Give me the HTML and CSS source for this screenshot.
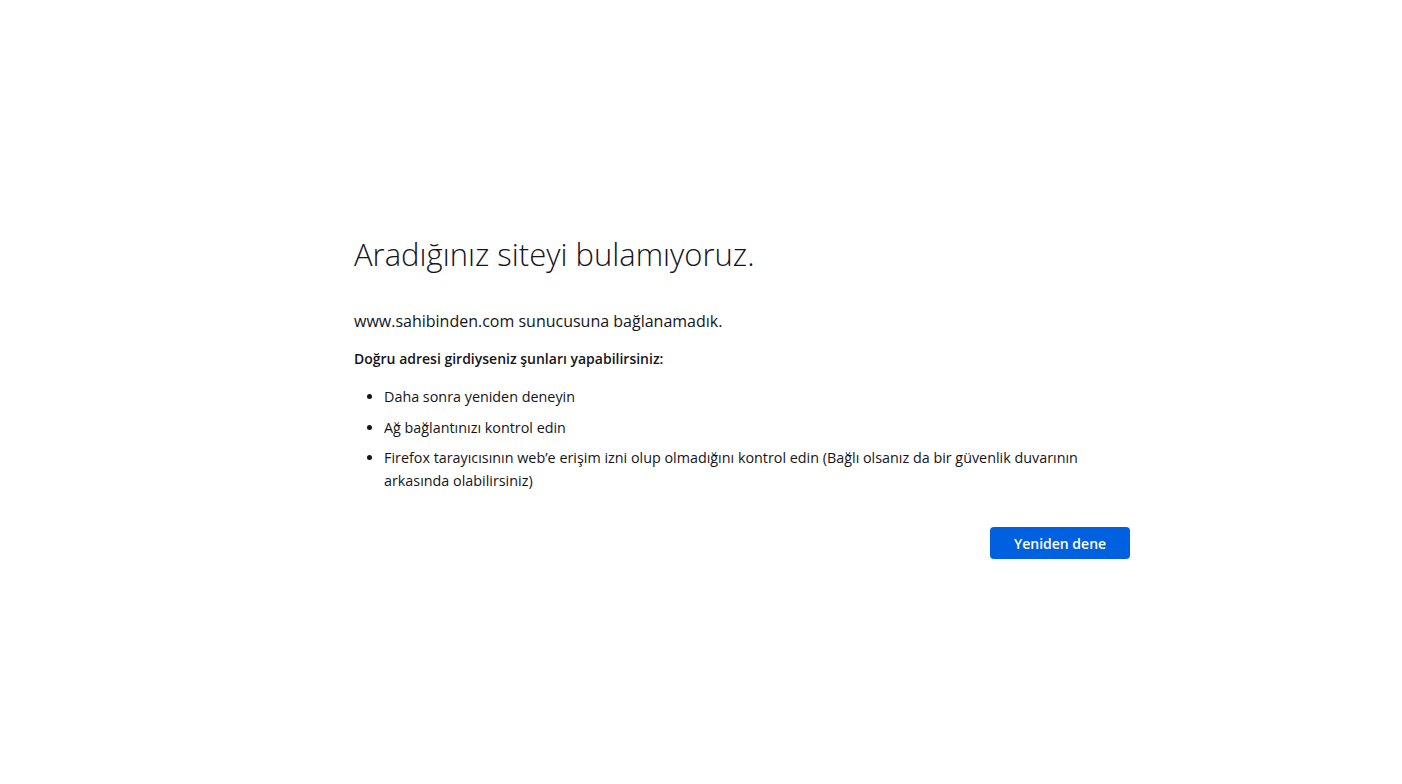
FILE: index.html
```html
<!DOCTYPE html>
<html lang="tr">
<head>
  <meta charset="UTF-8">
  <title>Sorun yükleme sayfası</title>
  <link rel="stylesheet" href="styles.css">
</head>
<body>
  <div class="error-container">
    <h1 class="title">Aradığınız siteyi bulamıyoruz.</h1>
    <p class="short-desc">www.sahibinden.com sunucusuna bağlanamadık.</p>
    <p class="long-title">Doğru adresi girdiyseniz şunları yapabilirsiniz:</p>
    <ul class="long-desc">
      <li>Daha sonra yeniden deneyin</li>
      <li>Ağ bağlantınızı kontrol edin</li>
      <li>Firefox tarayıcısının web’e erişim izni olup olmadığını kontrol edin (Bağlı olsanız da bir güvenlik duvarının arkasında olabilirsiniz)</li>
    </ul>
    <div class="button-row">
      <button class="primary">Yeniden dene</button>
    </div>
  </div>
</body>
</html>
```

FILE: styles.css
```css
body {
  margin: 0;
  font-family: "Open Sans", "Noto Sans", sans-serif;
  color: #15141a;
  background: #fff;
}

.error-container {
  width: 776px;
  margin-left: 354px;
  padding-top: 232px;
}

.title {
  font-size: 31px;
  font-weight: 300;
  margin: 0 0 32px;
  line-height: 44px;
}

.short-desc {
  font-size: 16px;
  margin: 0 0 14px;
  line-height: 26px;
}

.long-title {
  font-size: 14px;
  font-weight: 600;
  margin: 0 0 15px;
  line-height: 22px;
}

.long-desc {
  margin: 0;
  padding-left: 30px;
  font-size: 14.35px;
  line-height: 23px;
}

.long-desc li {
  margin-bottom: 7.5px;
  padding-right: 30px;
}

.button-row {
  display: flex;
  justify-content: flex-end;
  margin-top: 35px;
}

.primary {
  font-family: inherit;
  width: 140px;
  height: 32px;
  border: none;
  border-radius: 4px;
  background: #0061e0;
  color: #fff;
  font-size: 14px;
  font-weight: 600;
}
```
